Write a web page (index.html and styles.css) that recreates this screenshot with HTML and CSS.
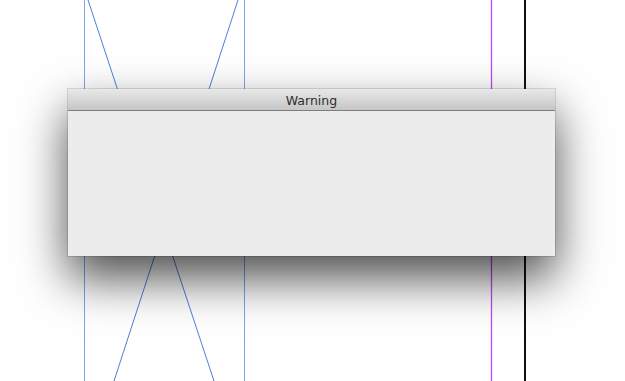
FILE: index.html
```html
<!DOCTYPE html>
<html lang="en">
<head>
  <meta charset="UTF-8" />
  <title>Warning</title>
  <link rel="stylesheet" href="styles.css">
</head>
<body>
  <!-- page guides behind the sheet -->
  <svg class="canvas" width="625" height="381" viewBox="0 0 625 381">
    <line x1="84.5" y1="0" x2="84.5" y2="381" class="frame" />
    <line x1="244.5" y1="0" x2="244.5" y2="381" class="frame" />
    <line x1="88" y1="0" x2="214" y2="381" class="diag" />
    <line x1="238" y1="0" x2="114" y2="381" class="diag" />
    <line x1="491.5" y1="0" x2="491.5" y2="381" class="bleed" />
    <line x1="525" y1="0" x2="525" y2="381" class="edge" />
  </svg>

  <div class="dialog">
    <div class="titlebar">Warning</div>
    <div class="content"></div>
  </div>
</body>
</html>
```

FILE: styles.css
```css
html, body {
  margin: 0;
  padding: 0;
  background: #fff;
  width: 625px;
  height: 381px;
  overflow: hidden;
  position: relative;
}

.canvas {
  display: block;
}

.frame {
  stroke: #79a6ee;
  stroke-width: 1;
}

.diag {
  stroke: #4f7fd8;
  stroke-width: 1;
}

.bleed {
  stroke: #b84cf0;
  stroke-width: 1.3;
}

.edge {
  stroke: #111;
  stroke-width: 2;
}

.dialog {
  position: absolute;
  left: 68px;
  top: 89px;
  width: 487px;
  height: 167px;
  display: flex;
  flex-direction: column;
  background: #ececec;
  box-shadow: 0 22px 45px rgba(0, 0, 0, 0.7), 0 0 0 1px rgba(0, 0, 0, 0.12);
}

.titlebar {
  height: 21px;
  line-height: 24px;
  text-align: center;
  font-family: "DejaVu Sans", "Liberation Sans", sans-serif;
  font-size: 12.5px;
  color: #2e2e2e;
  background: linear-gradient(#e8e8e8, #c6c6c6);
  border-bottom: 1px solid #7e7e7e;
}

.content {
  flex: 1;
  background: #ececec;
}
```
